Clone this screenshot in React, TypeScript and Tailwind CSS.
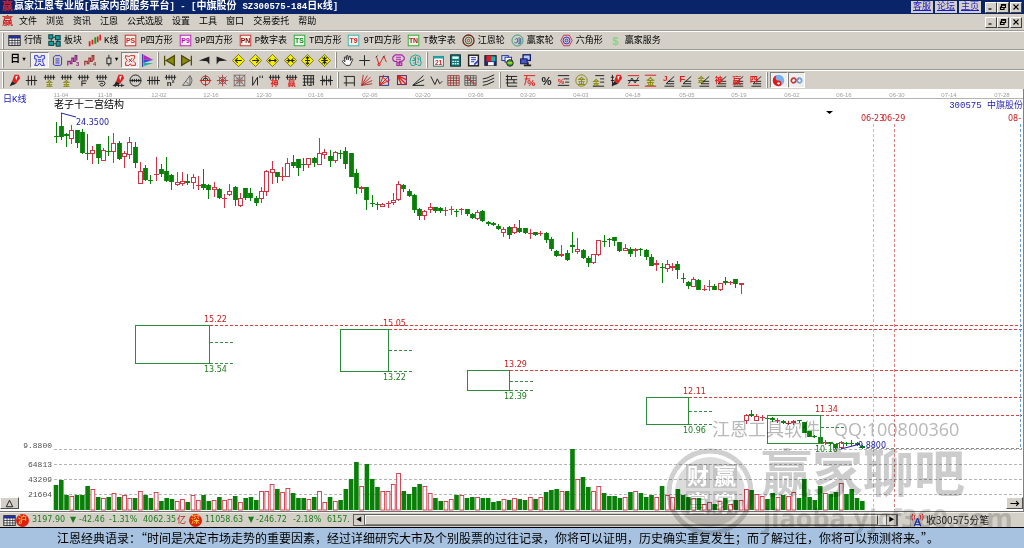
/**
 * Gann desktop terminal - daily K-line view for 300575.
 *
 *  - caption, menu and three toolbars
 *  - price / volume chart (one SVG, scales with the window)
 *  - index ticker, scroller and the quote of the day
 */

import type { ReactNode } from "react";
import clsx from "clsx";

type Candle = ["g" | "r", number, number, number, number, number];

// colour, wick top, body top, body bottom, wick bottom, volume top
const CANDLES: Candle[] = [
  ["g", 122, 136, 137, 143, 485], ["g", 113, 126, 137, 140, 480], ["g", 133, 134, 136, 147, 495],
  ["r", 125, 130, 139, 144, 496], ["g", 130, 130, 143, 148, 495], ["g", 129, 132, 153, 154, 495],
  ["g", 134, 153, 154, 160, 486], ["r", 146, 150, 154, 164, 489], ["g", 144, 144, 158, 164, 497],
  ["r", 148, 150, 161, 161, 498], ["g", 136, 151, 152, 156, 497], ["r", 133, 143, 152, 163, 493],
  ["g", 141, 143, 159, 160, 497], ["r", 151, 153, 157, 168, 495], ["r", 137, 142, 155, 159, 498],
  ["g", 142, 147, 163, 168, 498], ["r", 162, 171, 184, 184, 491], ["g", 165, 168, 180, 181, 495],
  ["g", 175, 180, 181, 184, 498], ["r", 157, 174, 175, 181, 492], ["g", 164, 169, 174, 177, 501],
  ["g", 157, 171, 181, 182, 498], ["g", 174, 175, 182, 190, 499], ["r", 172, 182, 185, 186, 501],
  ["r", 172, 181, 184, 186, 499], ["g", 174, 181, 183, 185, 502], ["r", 174, 177, 183, 189, 495],
  ["r", 176, 185, 186, 190, 500], ["g", 169, 184, 188, 190, 495], ["g", 184, 185, 190, 199, 501],
  ["r", 182, 187, 190, 197, 500], ["g", 188, 189, 198, 199, 497], ["r", 194, 198, 199, 208, 500],
  ["r", 184, 191, 195, 196, 499], ["g", 186, 187, 200, 206, 496], ["r", 193, 198, 206, 207, 502],
  ["g", 188, 188, 198, 200, 498], ["g", 188, 193, 198, 201, 497], ["g", 196, 198, 203, 206, 500],
  ["r", 187, 191, 199, 203, 491], ["r", 170, 171, 192, 196, 491], ["r", 161, 169, 173, 184, 484],
  ["g", 172, 172, 177, 183, 489], ["r", 167, 176, 177, 181, 492], ["r", 158, 163, 177, 177, 488],
  ["g", 155, 162, 166, 168, 493], ["g", 159, 159, 168, 176, 498], ["g", 158, 164, 165, 171, 498],
  ["r", 158, 158, 165, 168, 499], ["g", 157, 158, 163, 167, 497], ["r", 138, 153, 165, 165, 491],
  ["r", 149, 152, 155, 159, 502], ["g", 150, 156, 161, 167, 497], ["r", 151, 152, 161, 163, 501],
  ["g", 150, 153, 154, 159, 500], ["g", 147, 151, 164, 169, 489], ["g", 153, 153, 177, 177, 479],
  ["g", 169, 173, 188, 194, 462], ["r", 186, 187, 189, 193, 486], ["g", 187, 187, 200, 210, 464],
  ["g", 195, 203, 204, 207, 479], ["g", 202, 204, 205, 210, 487], ["r", 203, 204, 207, 207, 491],
  ["r", 201, 203, 204, 208, 491], ["r", 193, 200, 203, 205, 484], ["r", 181, 184, 200, 201, 473],
  ["g", 184, 185, 189, 192, 491], ["g", 189, 191, 196, 197, 494], ["g", 194, 195, 210, 213, 487],
  ["g", 208, 209, 216, 220, 484], ["r", 210, 211, 216, 220, 486], ["r", 203, 207, 210, 213, 493],
  ["g", 207, 207, 211, 213, 498], ["g", 207, 208, 211, 213, 501], ["r", 207, 210, 211, 216, 501],
  ["r", 206, 209, 210, 215, 499], ["g", 209, 211, 212, 217, 495], ["r", 208, 209, 210, 215, 495],
  ["g", 209, 209, 214, 216, 498], ["g", 213, 214, 218, 219, 497], ["r", 210, 212, 219, 220, 497],
  ["g", 210, 211, 221, 222, 498], ["g", 221, 222, 224, 226, 498], ["g", 222, 223, 225, 226, 502],
  ["g", 224, 226, 229, 230, 501], ["r", 227, 229, 233, 237, 499], ["g", 226, 227, 235, 239, 500],
  ["r", 224, 227, 233, 234, 498], ["g", 220, 228, 232, 233, 499], ["g", 228, 228, 233, 234, 500],
  ["r", 229, 233, 234, 239, 497], ["g", 232, 232, 235, 236, 499], ["r", 231, 233, 234, 236, 497],
  ["g", 232, 233, 240, 243, 492], ["g", 237, 239, 249, 251, 490], ["g", 250, 251, 256, 257, 489],
  ["r", 245, 254, 256, 257, 491], ["g", 250, 253, 260, 261, 491], ["g", 232, 245, 247, 253, 449],
  ["r", 238, 249, 252, 254, 479], ["g", 249, 250, 258, 259, 477], ["g", 256, 258, 263, 267, 487],
  ["r", 254, 254, 263, 264, 491], ["r", 240, 240, 255, 256, 486], ["g", 235, 241, 242, 247, 493],
  ["g", 238, 239, 240, 247, 496], ["g", 237, 237, 241, 246, 496], ["g", 242, 242, 251, 252, 498],
  ["r", 244, 248, 251, 251, 497], ["g", 247, 249, 254, 257, 492], ["r", 248, 249, 251, 257, 491],
  ["g", 248, 249, 250, 256, 493], ["g", 249, 250, 257, 260, 497], ["g", 254, 257, 266, 266, 495],
  ["r", 260, 263, 265, 271, 497], ["g", 263, 267, 268, 283, 486], ["r", 260, 264, 269, 272, 495],
  ["r", 263, 266, 268, 271, 497], ["g", 261, 264, 270, 279, 489], ["g", 273, 278, 279, 283, 495],
  ["g", 281, 282, 286, 289, 497], ["r", 277, 279, 287, 287, 498], ["g", 279, 280, 290, 290, 498],
  ["r", 285, 289, 290, 291, 504], ["r", 280, 286, 287, 291, 502], ["g", 284, 286, 290, 290, 504],
  ["r", 283, 283, 290, 291, 501], ["g", 277, 281, 283, 285, 498], ["r", 281, 282, 283, 285, 504],
  ["g", 279, 279, 284, 288, 500], ["r", 283, 283, 285, 294, 500], ["r", 414, 415, 421, 424, 489],
  ["g", 410, 414, 416, 417, 490], ["r", 414, 416, 421, 421, 494], ["r", 415, 417, 418, 421, 496],
  ["g", 416, 418, 419, 421, 499], ["g", 417, 418, 420, 422, 493], ["r", 418, 420, 421, 423, 497],
  ["g", 420, 421, 423, 424, 495], ["r", 421, 423, 424, 425, 496], ["r", 420, 421, 423, 425, 492],
  ["g", 420, 420, 421, 423, 498], ["g", 422, 422, 433, 433, 479], ["g", 431, 431, 437, 437, 497],
  ["g", 435, 436, 437, 438, 500], ["g", 437, 437, 443, 444, 486], ["r", 440, 442, 443, 445, 493],
  ["g", 442, 442, 444, 445, 494], ["g", 444, 444, 448, 449, 492], ["r", 441, 442, 448, 449, 483],
  ["g", 442, 443, 444, 446, 494], ["g", 440, 443, 444, 446, 489], ["g", 442, 443, 445, 446, 498],
  ["g", 445, 446, 448, 449, 501],
];

const AXIS_DATES: [number, string][] = [
  [61, "11-04"], [105, "11-18"], [159, "12-02"], [211, "12-16"], [264, "12-30"],
  [316, "01-16"], [370, "02-06"], [423, "02-20"], [476, "03-06"], [528, "03-20"],
  [581, "04-03"], [633, "04-18"], [687, "05-05"], [739, "05-19"], [792, "06-02"],
  [844, "06-16"], [897, "06-30"], [949, "07-14"], [1002, "07-28"],
];

// Palace boxes: left, right, top, bottom, middle level, high and low price
const BOXES = [
  { x1: 135, x2: 209, y1: 325, y2: 363, mid: 342, high: "15.22", low: "13.54" },
  { x1: 340, x2: 388, y1: 329, y2: 371, mid: 350, high: "15.05", low: "13.22" },
  { x1: 467, x2: 509, y1: 370, y2: 390, mid: 381, high: "13.29", low: "12.39" },
  { x1: 646, x2: 688, y1: 397, y2: 424, mid: 411, high: "12.11", low: "10.96" },
  { x1: 767, x2: 820, y1: 415, y2: 443, mid: 427, high: "11.34", low: "10.10" },
];

const VOLUME_LEVELS: [number, string][] = [
  [464, "64813"],
  [479, "43209"],
  [494, "21604"],
];

const MENUS = ["文件", "浏览", "资讯", "江恩", "公式选股", "设置", "工具", "窗口", "交易委托", "帮助"];

const QUOTE =
  "江恩经典语录：“时间是决定市场走势的重要因素，经过详细研究大市及个别股票的过往记录，你将可以证明，历史确实重复发生；而了解过往，你将可以预测将来。”。";

const RED = "#e02020";
const INK = "#222222";
const OLIVE = "#8a8a10";

/* ---------- icon helpers, all on a 16 x 16 grid ---------- */

function Icon({ children }: { children: ReactNode }) {
  return (
    <svg viewBox="0 0 16 16" className="size-[13px] shrink-0" fill="none" stroke={INK} strokeWidth="1.2" aria-hidden="true">
      {children}
    </svg>
  );
}

function Char({ t, x = 8, y = 15, size = 10, color = RED }: { t: string; x?: number; y?: number; size?: number; color?: string }) {
  return (
    <text x={x} y={y} fontSize={size} fill={color} stroke="none" textAnchor="middle" fontWeight="bold" fontFamily="'Liberation Sans','Noto Sans CJK SC',sans-serif">
      {t}
    </text>
  );
}

const Comb = () => <path d="M1 4H15M3 1V7M6.3 1V7M9.6 1V7M13 1V7" />;
const Levels = () => <path d="M3 15H15M5 12H15M7 9H15M5 12L15 3" />;
const Pen = () => (
  <g stroke="none">
    <path d="M8 1L13 1L15 5L10 12L5 9Z" fill={RED} />
    <path d="M5 9L10 12L2 15Z" fill={INK} />
    <path d="M9 3L12 2L10 8Z" fill="#ffffff" />
  </g>
);
const Grid = ({ color = "#8b2222" }: { color?: string }) => (
  <path stroke={color} strokeWidth="0.9" d="M1 2H15V14H1ZM1 5H15M1 8H15M1 11H15M4.5 2V14M8 2V14M11.5 2V14" />
);
const LetterBox = ({ t, color, text = RED }: { t: string; color: string; text?: string }) => (
  <>
    <rect x="1.5" y="1.5" width="13" height="13" stroke={color} fill="#f4f0e8" />
    <Char t={t} y={11.5} size={8.5} color={text} />
  </>
);
const Diamond = ({ d }: { d: string }) => (
  <>
    <path d="M8 0.5L15.5 8L8 15.5L0.5 8Z" fill="#f4f000" stroke="#55550a" strokeWidth="0.9" />
    <path d={d} strokeWidth="1.3" />
  </>
);

const SHORTCUTS: { label: string; icon: ReactNode }[] = [
  {
    label: "行情",
    icon: <><rect x="1" y="2" width="14" height="12" fill="#fff" stroke="#223" /><path d="M1 4H15" stroke="#1c2c9c" strokeWidth="3" /><path d="M1 8H15M1 11H15M5 5V14M8.5 5V14M12 5V14" strokeWidth="0.9" /></>,
  },
  {
    label: "板块",
    icon: <g fill="#12a0a0" stroke="#0b3c3c"><rect x="1" y="1" width="5" height="5" /><rect x="9" y="2" width="6" height="5" /><rect x="1" y="9" width="6" height="5" /><rect x="10" y="9" width="5" height="6" /><path d="M6 4H9M4 6V9M12 7V9M7 12H10" /></g>,
  },
  {
    label: "K线",
    icon: <><path d="M2 9V15M5.5 7V13" stroke={RED} strokeWidth="2.2" /><path d="M9 4V12" stroke="#10a010" strokeWidth="2.4" /><path d="M12 3V10M15 1V8" stroke={RED} strokeWidth="2" /></>,
  },
  { label: "P四方形", icon: <LetterBox t="PS" color="#d03030" /> },
  { label: "9P四方形", icon: <LetterBox t="P9" color="#c020c0" text="#b010b0" /> },
  { label: "P数字表", icon: <LetterBox t="PN" color="#d03030" text="#701010" /> },
  { label: "T四方形", icon: <LetterBox t="TS" color="#20b040" text="#109020" /> },
  { label: "9T四方形", icon: <LetterBox t="T9" color="#30b8b8" /> },
  { label: "T数字表", icon: <LetterBox t="TN" color="#30b030" text="#a02020" /> },
  {
    label: "江恩轮",
    icon: <><circle cx="8" cy="8" r="6.8" stroke="#702020" strokeWidth="1.6" /><circle cx="8" cy="8" r="4" stroke="#207020" /><circle cx="8" cy="8" r="1.5" stroke={RED} /></>,
  },
  {
    label: "赢家轮",
    icon: <><circle cx="8" cy="8" r="6.8" stroke="#3a9a70" /><path d="M5 7Q8 3 8 8T4 10M10 4V12M12 5V11Q11 13 9 12" stroke="#3060a0" /></>,
  },
  {
    label: "六角形",
    icon: <><path d="M4.5 1.5H11.5L15 8L11.5 14.5H4.5L1 8Z" stroke="#d03050" /><circle cx="8" cy="8" r="4.2" stroke="#3030d0" /><circle cx="8" cy="8" r="1.7" stroke="#3030d0" /></>,
  },
  { label: "赢家服务", icon: <Char t="$" y={13} size={14} color="#7ed87e" /> },
];

type Tool = { name: string; icon: ReactNode; pressed?: boolean };

const CHART_TOOLS: Tool[] = [
  { name: "主图", pressed: true, icon: <path stroke="#3038d8" d="M2 2H6V4H10V2H14V6H12V10L14 14H10L8 11L6 14H2L4 10V6H2ZM6 7H10M6 9H10" /> },
  { name: "报告", icon: <path stroke="#3038d8" d="M3 4L5 2H11L13 4V13L11 14H5L3 13ZM5.5 6H10.5M5.5 8.5H10.5M5.5 11H10.5" /> },
  { name: "三段", icon: <><path stroke="#8a2080" d="M1 14V9H4V12H6V5H8V9H10V2H12V8" strokeWidth="1.5" /><Char t="3" x={13} y={15} size={7} color="#8a2080" /></> },
  { name: "四段", icon: <><path stroke="#a03030" d="M1 14V9H4V12H6V5H8V9H10V2H12V8" strokeWidth="1.5" /><Char t="4" x={13} y={15} size={7} color="#a03030" /></> },
];

const PLAY_TOOLS: Tool[] = [
  { name: "首页", icon: <path d="M2 2V14M14 2V14L4 8Z" fill={OLIVE} stroke="#4c4c08" strokeWidth="1.6" /> },
  { name: "末页", icon: <path d="M14 2V14M2 2V14L12 8Z" fill={OLIVE} stroke="#4c4c08" strokeWidth="1.6" /> },
  { name: "上一只", icon: <path d="M14 3V13L11 9L1 8Z" fill={INK} stroke="none" /> },
  { name: "下一只", icon: <path d="M2 3V13L5 9L15 8Z" fill={INK} stroke="none" /> },
  { name: "左移", icon: <Diamond d="M12 8H4M7 5L4 8L7 11" /> },
  { name: "右移", icon: <Diamond d="M4 8H12M9 5L12 8L9 11" /> },
  { name: "左右扩展", icon: <Diamond d="M3 8H13M5.5 6L3.5 8L5.5 10M10.5 6L12.5 8L10.5 10" /> },
  { name: "左右压缩", icon: <Diamond d="M3 8H13M4.5 5.5L7 8L4.5 10.5M11.5 5.5L9 8L11.5 10.5" /> },
  { name: "上下扩展", icon: <Diamond d="M8 3V13M6 5.5L8 3.5L10 5.5M6 10.5L8 12.5L10 10.5M5 8H11" /> },
  { name: "上下压缩", icon: <Diamond d="M8 3V13M5.5 4.5L8 7L10.5 4.5M5.5 11.5L8 9L10.5 11.5M4 8H12" /> },
];

const CURSOR_TOOLS: Tool[] = [
  { name: "拖动", icon: <path fill="#fff" strokeWidth="1.1" d="M6 14L1.5 9L3 8L5 9.5L4 4L5.5 3.5L7 7V2H8.5L9 7L10.5 2.5L12 3L11.5 8L13.5 5.5L14.5 6.5L12 12L11 14Z" /> },
  { name: "十字", icon: <path d="M8 1.5V14.5M1.5 8H14.5" /> },
  { name: "折线", icon: <><path stroke={RED} d="M2 4L5 13L11 3L14 10" /><path d="M1 4L3 2M10 4L12 2" /><circle cx="5" cy="13" r="1.5" stroke={RED} /></> },
  { name: "江恩箱", icon: <path stroke="#b020b0" strokeWidth="1.4" d="M1 4L4 1H12L15 4V7L12 9H9V14H6V9H3L1 7ZM5 4H11M5 6.5H11M6 11H12V14H9" /> },
  { name: "脑图", icon: <path stroke="#16a090" d="M2 6Q2 2 6 2Q8 0 10 2Q15 2 14 7Q16 11 14 14H11Q10 12 8 13Q6 15 3 14Q0 9 2 6ZM5 5H7V8H4M8 3V13M10 5H12V8M10 10H12M5 11H7" /> },
];

const SYSTEM_TOOLS: Tool[] = [
  { name: "日历", icon: <><rect x="2" y="3" width="12" height="12" fill="#fff" stroke="#187878" /><path d="M2 4H14" stroke="#20a0a0" strokeWidth="3" /><Char t="21" y={13.5} size={8} /></> },
  { name: "计算器", icon: <><rect x="2" y="1" width="12" height="14" fill="#107878" stroke="#082c2c" /><rect x="4" y="3" width="8" height="3" fill="#dff" stroke="none" /><path d="M4 9H12M4 12H12" stroke="#dff" strokeDasharray="2 1" strokeWidth="1.6" /></> },
  { name: "记事", icon: <><rect x="2" y="1.5" width="12" height="13" fill="#f4f4ff" strokeWidth="1.8" /><path d="M5 4.5H11M5 7H11M5 9.5H9" stroke="#2838b8" /><path d="M9 13L14 8" stroke="#2838b8" strokeWidth="2" /></> },
  { name: "保存", icon: <><rect x="1" y="2" width="14" height="12" fill="#202a90" /><rect x="3" y="2" width="7" height="7" fill="#e02020" stroke="none" /><rect x="9" y="3" width="5" height="6" fill="#20b0b0" stroke="none" /><rect x="5" y="10" width="7" height="4" fill="#fff" stroke="none" /></> },
  { name: "网络", icon: <><rect x="1" y="2" width="8" height="6" fill="#d8e4ff" stroke="#2030a0" /><rect x="5" y="4" width="8" height="6" fill="#fff" stroke="#2030a0" /><circle cx="11" cy="11" r="4" fill="#38a048" /><path d="M8 11H14" stroke="#ff0" /></> },
  { name: "传输", icon: <><rect x="5" y="1" width="9" height="7" fill="#b8c8f8" stroke="#101860" strokeWidth="1.6" /><rect x="2" y="6" width="8" height="6" fill="#4858c0" stroke="#101860" /><path d="M6 14H15M11 10V14" strokeWidth="2" /></> },
];

const DRAW_TOOLS: Tool[] = [
  { name: "画笔", icon: <Pen /> },
  { name: "等分", icon: <path d="M1 8H15M4 2V14M8 2V14M12 2V14" /> },
  { name: "黄金一", icon: <><Comb /><Char t="金" size={9} color={OLIVE} /></> },
  { name: "黄金二", icon: <><Comb /><Char t="金" size={9} color={OLIVE} /></> },
  { name: "斐波", icon: <><Comb /><path d="M6 15V8.5H12M6 11.5H11" /></> },
  { name: "螺旋", icon: <><Comb /><path d="M4 9H11Q14 12 11 14Q7 16 6 13Q7 10 10 12" /></> },
  { name: "标尺", icon: <><Pen /><path d="M1 14H15M4 12V16M8 12V16M12 12V16" /></> },
  { name: "圆尺", icon: <><circle cx="8" cy="8" r="6.8" /><path d="M1 8H15M4 6V10M6.6 6V10M9.3 6V10M12 6V10" /></> },
  { name: "周期", icon: <path d="M0 8H16M3 3V13M6.3 3V13M9.6 3V13M13 3V13" /> },
  { name: "平方", icon: <><Comb /><Char t="n²" y={15} size={10} color={INK} /></> },
  { name: "扇形", icon: <path stroke="#666" d="M2 14L11 2V14ZM11 2Q16 8 11 14M6 9L11 14" /> },
  { name: "圆心", icon: <><circle cx="8" cy="8" r="5.5" stroke="#b02020" /><path d="M8 1V15M1 8H15" stroke={RED} /><path d="M5 8A3 3 0 0 1 11 8" /></> },
  { name: "星形", icon: <><path stroke="#c04040" d="M8 1V15M1 8H15M3 3L13 13M13 3L3 13" /><circle cx="8" cy="8" r="4" stroke="#666" /></> },
  { name: "方阵", icon: <><rect x="1.5" y="1.5" width="13" height="13" stroke="#777" /><path stroke="#a05050" d="M1 1L15 15M15 1L1 15M8 1V15M1 8H15" strokeWidth="0.9" /><rect x="5" y="5" width="6" height="6" stroke="#777" /></> },
  { name: "波动", icon: <path d="M2 3V14L8 4V14M11 2V5M14 2V5" /> },
  { name: "神奇", icon: <><Comb /><Char t="神" size={10} /></> },
  { name: "赢家", icon: <><Comb /><Char t="赢" size={10} /></> },
  { name: "网格", icon: <path d="M1 2H15M1 6H15M1 10H15M3 2V14M7 2V14M11 2V14M14 2V14M1 14H5M8 14H12" /> },
  { name: "对称", icon: <path d="M0 8H16M3 2V14M8 2V14M13 2V14M5 6V10M11 6V10" /> },
];

const SHAPE_TOOLS: Tool[] = [
  { name: "方框", icon: <path d="M4 3H14V11H4ZM1 3H4M4 11V15M1 11H4M14 11V15" /> },
  { name: "射线", icon: <path stroke="#b83030" d="M2 14L4 1M2 14L9 2M2 14L13 4M2 14L15 8M2 14L15 12" /> },
  { name: "箱射线", icon: <><rect x="2" y="3" width="11" height="11" stroke="#333a90" /><path stroke={RED} d="M2 14L13 3M2 14L7 1M2 14L15 7M5 3L13 11" /></> },
  { name: "角度箱", icon: <><rect x="3" y="2" width="11" height="11" stroke="#5a2060" /><path stroke={RED} strokeWidth="1.7" d="M3 2L14 13M3 2L14 7M3 2L8 13" /></> },
  { name: "角度线", icon: <path d="M1 14L14 2M1 14L15 7M1 14H15" /> },
  { name: "波浪", icon: <path d="M1 3L6 13L9 6L12 12L15 9" /> },
  { name: "红格", icon: <Grid /> },
  { name: "格线", icon: <><Grid color="#444444" /><path d="M1 2L15 14" stroke={RED} /></> },
  { name: "平行", icon: <path d="M1 6L6 5L15 1M1 10L6 9L15 5M1 14L6 13L15 9" /> },
];

const LEVEL_TOOLS: Tool[] = [
  { name: "阶梯", icon: <path d="M3 1V15M1 3H15M1 7H15M1 11H15M3 15H15M8 3V7M11 7V11" /> },
  { name: "回撤", icon: <><path stroke={RED} d="M1 2H15M2 6H9M5 2L2 14" /><Char t="%" x={10} size={11} /></> },
  { name: "百分比", icon: <Char t="%" y={13} size={14} color={INK} /> },
  { name: "百分线", icon: <><path d="M1 2H15M8 6H15M10 10H15M1 14H15" /><Char t="%" x={5} y={12} size={9} /></> },
  { name: "金圆", icon: <><circle cx="8" cy="8" r="7" stroke={OLIVE} /><Char t="金" y={12} size={10} color={OLIVE} /></> },
  { name: "金线", icon: <><path d="M4 2H15M10 6H15M10 10H15M1 15H15" /><Char t="金" x={5} y={13} size={9} color={OLIVE} /></> },
  { name: "标注", icon: <><Pen /><path d="M3 1V15M1 4H5M1 8H5" /></> },
  { name: "通道", icon: <><path stroke={RED} d="M1 2H15M1 14H15" /><path d="M2 12L6 5L10 11L14 4M1 8H15" /></> },
  { name: "金带", icon: <><path stroke={RED} d="M1 1.5H15M1 15H15" /><Char t="金" y={13} size={11} color={OLIVE} /></> },
  { name: "江恩角", icon: <><Levels /><Char t="J" x={4} y={9} size={10} /></> },
  { name: "斐波角", icon: <><Levels /><Char t="F" x={4} y={10} size={12} /></> },
  { name: "黄金角", icon: <><Levels /><Char t="金" x={5} y={10} size={9} color={OLIVE} /></> },
  { name: "神角", icon: <><Levels /><Char t="神" x={6} y={11} size={10} /></> },
  { name: "赢角", icon: <><Levels /><Char t="赢" x={7} y={12} size={11} /></> },
  { name: "四角", icon: <><Levels /><Char t="四" x={6} y={10} size={10} /></> },
];

function ToolGroup({ tools, className }: { tools: Tool[]; className: string }) {
  return (
    <div className={clsx("flex h-full shrink-0 items-center", className)}>
      {tools.map((tool) => (
        <button
          key={tool.name}
          aria-label={tool.name}
          className={clsx(
            "flex h-4 flex-1 items-center justify-center",
            tool.pressed && "border border-t-[#808080] border-l-[#808080] border-r-white border-b-white bg-[#efeeea]"
          )}
        >
          <Icon>{tool.icon}</Icon>
        </button>
      ))}
    </div>
  );
}

const Grip = () => <span className="mx-[2px] h-4 w-[2px] shrink-0 border-l border-white bg-[#8c8a84]" />;

function WindowButtons() {
  return (
    <div className="ml-1 flex">
      {["M3 12H9", "M5 3H13V9H5ZM5 4.5H13M3 7V13H10V10", "M3 3L13 13M13 3L3 13"].map((d, i) => (
        <button
          key={d}
          aria-label={["最小化", "还原", "关闭"][i]}
          className="flex h-[11px] w-3 items-center justify-center border border-t-white border-l-white border-r-[#404040] border-b-[#404040] bg-[#d4d0c8] last:ml-px"
        >
          <svg viewBox="0 0 16 16" className="size-2" fill="none" stroke="#000" strokeWidth="2.4">
            <path d={d} />
          </svg>
        </button>
      ))}
    </div>
  );
}

function Chart() {
  return (
    <svg viewBox="0 89 1024 422" className="block w-full bg-white" fontFamily="'DejaVu Sans',sans-serif" fontSize="8">
      {/* date axis */}
      <path d="M54 98.5H1024" stroke="#b4b4b4" fill="none" />
      <g fill="#a0a0a0" fontSize="6" textAnchor="middle" fontFamily="'Liberation Sans',sans-serif">
        {AXIS_DATES.map(([x, label]) => (
          <text key={label} x={x} y="97">{label}</text>
        ))}
      </g>

      {/* headings */}
      <g fontFamily="'Liberation Mono','Noto Sans CJK SC',monospace" fontSize="9">
        <text x="3" y="102" fill="#2222b8">日K线</text>
        <text x="54" y="108" fill="#000" fontSize="10">老子十二宫结构</text>
        <text x="1023" y="108" fill="#2222b8" textAnchor="end">300575 中旗股份</text>
      </g>

      {/* price and volume levels */}
      <g stroke="#b4b4b4" strokeDasharray="3 2" fill="none">
        <path d="M54 449.5H1022" />
        {VOLUME_LEVELS.map(([y]) => (
          <path key={y} d={`M54 ${y + 0.5}H1022`} />
        ))}
      </g>
      <g fill="#505050" textAnchor="end" fontFamily="'Liberation Mono',monospace">
        <text x="52" y="448">9.8800</text>
        {VOLUME_LEVELS.map(([y, label]) => (
          <text key={label} x="52" y={y + 3}>{label}</text>
        ))}
      </g>

      {/* candles with their volume bars */}
      {CANDLES.map(([kind, high, top, bottom, low, volume], i) => {
        const x = 56 + i * 5.27;
        const mid = Math.floor(x) + 0.5;
        if (kind === "g") {
          return (
            <g key={i} fill="#088008">
              <path d={`M${mid} ${high}V${low}`} stroke="#088008" />
              <rect x={mid - 2.4} y={top} width="4.8" height={Math.max(bottom - top, 1)} />
              <rect x={x - 2.3} y={volume} width="4.6" height={510 - volume} />
            </g>
          );
        }
        return (
          <g key={i} fill="#fff" stroke="#d03444">
            <path d={`M${mid} ${high}V${low}`} />
            {bottom - top > 1 ? (
              <rect x={mid - 2} y={top + 0.5} width="4" height={bottom - top - 1} />
            ) : (
              <path d={`M${mid - 2.5} ${top + 0.5}H${mid + 2.5}`} />
            )}
            <rect x={x - 1.9} y={volume + 0.5} width="3.8" height={509.5 - volume} strokeWidth="0.9" />
          </g>
        );
      })}

      {/* palace boxes */}
      {BOXES.map((box) => (
        <g key={box.high} fill="none">
          <rect x={box.x1 + 0.5} y={box.y1 + 0.5} width={box.x2 - box.x1} height={box.y2 - box.y1} stroke="#2c8c3c" />
          <path d={`M${box.x2 + 1} ${box.y1 + 0.5}H1022`} stroke="#d84040" strokeDasharray="3 2" />
          <path d={`M${box.x2 + 1} ${box.mid + 0.5}h25M${box.x2 + 1} ${box.y2 + 0.5}h25`} stroke="#3a8a46" strokeDasharray="3 2" />
          <text x={box.x2 - 5} y={box.y1 - 3} fill="#c41c1c">{box.high}</text>
          <text x={box.x2 - 5} y={box.y2 + 9} fill="#1c7c1c">{box.low}</text>
        </g>
      ))}

      {/* projected dates */}
      <g fill="none" strokeDasharray="3 2">
        <path d="M873.5 124V510" stroke="#98cce0" />
        <path d="M894.5 124V510" stroke="#d88080" />
        <path d="M1020.5 124V448" stroke="#6c9cdc" />
        <path d="M866 448.5H1022" stroke="#888888" />
      </g>
      <g fill="#c41c1c">
        <text x="861" y="121">06-23</text>
        <text x="882" y="121">06-29</text>
        <text x="1008" y="121">08-</text>
      </g>
      <path d="M826 111H833L829.5 114Z" fill="#000" />

      {/* extremes */}
      <g fill="#2020a8">
        <path d="M61 113L76 117M841 449L860 444" stroke="#2020a8" fill="none" />
        <text x="76" y="125">24.3500</text>
        <text x="858" y="448">9.8800</text>
      </g>
      <path d="M1023.5 89V511" stroke="#808080" fill="none" />
    </svg>
  );
}

function Watermark() {
  return (
    <svg
      viewBox="0 0 364 148"
      className="pointer-events-none absolute right-0 bottom-0 w-[364px] mix-blend-multiply"
      fill="#cccccc"
      fontFamily="'Open Sans','Noto Sans CJK SC',sans-serif"
      aria-hidden="true"
    >
      <text x="52" y="36" fontSize="18" fill="#b8b8b8">江恩工具软件</text>
      <text x="174" y="36" fontSize="18" fill="#b8b8b8">QQ:100800360</text>
      <circle cx="50" cy="92" r="41" fill="none" stroke="#d0d0d0" strokeWidth="5" />
      <circle cx="50" cy="92" r="35" fill="#dcdcdc" />
      <g fill="#c4c4c4">
        <rect x="26" y="64" width="24" height="24" />
        <rect x="53" y="64" width="24" height="24" />
        <rect x="26" y="91" width="24" height="24" />
        <rect x="53" y="91" width="24" height="24" />
      </g>
      <g fill="#ffffff" fontSize="22" fontWeight="bold">
        <text x="27" y="84">财</text>
        <text x="54" y="84">赢</text>
        <text x="27" y="111">富</text>
        <text x="54" y="111">家</text>
      </g>
      <text x="101" y="92" fontSize="51" fontWeight="bold">赢家聊吧</text>
      <text x="103" y="128" fontSize="27" fontWeight="bold" fill="#d6d6d6">jiaoba.yjcf360.com</text>
    </svg>
  );
}

function IndexBadge({ t }: { t: string }) {
  return (
    <span className="flex size-[13px] shrink-0 items-center justify-center rounded-full bg-[#dc2010] text-[9px] leading-none text-[#ffe840]">{t}</span>
  );
}

function StatusBar() {
  return (
    <div className="flex h-[15px] items-center border-t border-[#f0eee8] bg-[#d4d0c8] text-[8px] text-[#1c7c1c]">
      <div className="flex w-[353px] shrink-0 items-center overflow-hidden pl-[3px] font-['DejaVu_Sans','Noto_Sans_CJK_SC',sans-serif] whitespace-nowrap">
        <Icon>{SHORTCUTS[0].icon}</Icon>
        <IndexBadge t="沪" />
        <span className="ml-[3px] w-[38px] shrink-0">3197.90</span>
        <span className="w-[9px] shrink-0">▼</span>
        <span className="w-[30px] shrink-0">-42.46</span>
        <span className="w-[34px] shrink-0">-1.31%</span>
        <span className="w-[34px] shrink-0">4062.35</span>
        <span className="w-3 shrink-0 text-[9px] text-[#b02020]">亿</span>
        <IndexBadge t="深" />
        <span className="ml-[3px] w-[43px] shrink-0">11058.63</span>
        <span className="w-2 shrink-0">▼</span>
        <span className="w-[37px] shrink-0">-246.72</span>
        <span className="w-[34px] shrink-0">-2.18%</span>
        <span>6157.</span>
      </div>
      <div className="flex h-3 flex-1 items-center border border-[#606060] bg-[#e8e6e0]">
        <button aria-label="向左" className="flex h-full w-[11px] items-center justify-center border-r border-[#606060] bg-[#d4d0c8] text-[6px] text-black">◀</button>
        <span className="h-full flex-1 border border-t-white border-l-white border-r-[#404040] border-b-[#808080] bg-[#d4d0c8]" />
        <span className="w-2" />
        <button aria-label="向右" className="flex h-full w-[11px] items-center justify-center border-x border-[#606060] bg-[#d4d0c8] text-[6px] text-black">▶</button>
      </div>
      <div className="ml-3 flex w-[114px] shrink-0 items-center gap-[2px] border-l border-[#a8a49c] font-['Noto_Sans_CJK_SC',sans-serif] text-[10px] leading-3 text-[#222]">
        <Icon>
          <path d="M8 5L4 15M8 5L12 15M6 10H10M5 13H11" stroke="#2038b0" strokeWidth="1.6" />
          <path d="M5 1Q3 4 5 7M11 1Q13 4 11 7M2 0Q0 4 2 8M14 0Q16 4 14 8" stroke={RED} />
        </Icon>
        收300575分笔
      </div>
    </div>
  );
}

export default function App() {
  return (
    <div className="relative flex min-h-screen flex-col overflow-hidden bg-[#d4d0c8] font-['Liberation_Mono','Noto_Sans_CJK_SC',monospace] text-[9px] leading-3 text-black">
      {/* Caption */}
      <header className="flex h-[14px] items-center bg-[#0a246a] px-[2px]">
        <span className="w-3 shrink-0 text-[11px] font-bold text-[#e02030]">赢</span>
        <h1 className="flex flex-1 items-baseline text-[10px] leading-[14px] font-bold whitespace-pre text-white">
          赢家江恩专业版<span className="text-[9px]">[</span>赢家内部服务平台<span className="text-[9px]">] - [</span>中旗股份
          <span className="ml-[6px] text-[9px]">SZ300575-184</span>日<span className="text-[9px]">K</span>线<span className="text-[9px]">]</span>
        </h1>
        <nav className="flex gap-[2px]">
          {["客服", "论坛", "主页"].map((label) => (
            <a key={label} href="#" className="flex h-3 w-[22px] items-center justify-center bg-[#d4d0c8] text-[9px] leading-3 text-[#1818d0] underline">
              {label}
            </a>
          ))}
        </nav>
        <WindowButtons />
      </header>

      {/* Menu */}
      <div className="flex h-[17px] items-center border-b border-[#9c9a94] px-[2px]">
        <span className="w-[17px] shrink-0 text-[11px] font-bold text-[#d02020]">赢</span>
        <nav className="flex flex-1 gap-[9px]">
          {MENUS.map((menu) => (
            <button key={menu}>{menu}</button>
          ))}
        </nav>
        <WindowButtons />
      </div>

      {/* Shortcuts */}
      <div className="flex h-[19px] items-center border-t border-b border-t-white border-b-[#9c9a94]">
        <Grip />
        {SHORTCUTS.map(({ label, icon }) => (
          <button key={label} className="flex shrink-0 items-center gap-[3px] pr-[4px] pl-[2px] whitespace-nowrap">
            <Icon>{icon}</Icon>
            {label}
          </button>
        ))}
      </div>

      {/* Chart tools */}
      <div className="flex h-5 items-center border-t border-b border-t-white border-b-[#9c9a94]">
        <Grip />
        <button className="flex w-6 items-center justify-center text-[10px] font-bold">
          日<span className="ml-[2px] text-[6px]">▼</span>
        </button>
        <ToolGroup tools={CHART_TOOLS} className="w-[69px]" />
        <button aria-label="线型" className="flex w-[22px] items-center justify-center">
          <Icon>
            <rect x="6" y="5" width="5" height="7" />
            <path d="M8.5 1V5M8.5 12V15" />
          </Icon>
          <span className="text-[6px]">▼</span>
        </button>
        <ToolGroup
          tools={[
            { name: "形态", pressed: true, icon: <path stroke="#d02828" d="M2 2L6 3L8 2L13 2V5L11 8L14 11V14H9L8 12L6 14H2V10L4 8L2 5ZM6 6L10 10M10 5L6 10" /> },
            { name: "分布", icon: <><path d="M2 0V16" stroke="#2828a0" /><path d="M3 1L15 7H3Z" fill="#c020c0" stroke="none" /><path d="M3 7H15L3 11Z" fill="#3050d0" stroke="none" /><path d="M3 11H15L3 15Z" fill="#20b0a0" stroke="none" /></> },
          ]}
          className="w-[34px]"
        />
        <Grip />
        <ToolGroup tools={PLAY_TOOLS} className="w-[172px]" />
        <Grip />
        <ToolGroup tools={CURSOR_TOOLS} className="w-[85px]" />
        <Grip />
        <ToolGroup tools={SYSTEM_TOOLS} className="w-[104px]" />
      </div>

      {/* Drawing tools */}
      <div className="flex h-[19px] items-center border-t border-white">
        <Grip />
        <ToolGroup tools={DRAW_TOOLS} className="w-[329px]" />
        <Grip />
        <ToolGroup tools={SHAPE_TOOLS} className="w-[156px]" />
        <Grip />
        <ToolGroup tools={LEVEL_TOOLS} className="w-[261px]" />
        <Grip />
        <ToolGroup
          tools={[
            { name: "太极", pressed: true, icon: <><circle cx="8" cy="8" r="7" fill="#78b0f0" stroke="none" /><path d="M8 1A7 7 0 0 0 8 15A3.5 3.5 0 0 0 8 8A3.5 3.5 0 0 1 8 1Z" fill="#e01818" stroke="none" /><circle cx="8" cy="11.5" r="1.5" fill="#fff" stroke="none" /></> },
            { name: "循环", pressed: true, icon: <><path d="M8 8Q5 3 2.5 6T4 11Q6 11 8 8L11 5" stroke="#d03030" strokeWidth="2" /><path d="M8 8Q11 3 13.5 6T12 11Q10 11 8 8" stroke="#68a0e0" strokeWidth="2" /></> },
          ]}
          className="w-[35px]"
        />
      </div>

      {/* Chart */}
      <main className="relative">
        <Chart />
        <button aria-label="展开指标" className="absolute bottom-[2px] left-0 flex h-3 w-[19px] items-center justify-center border border-t-white border-l-white border-r-[#505050] border-b-[#505050] bg-[#d4d0c8]">
          <Icon><path d="M8 4L12 12H4Z" /></Icon>
        </button>
        <button aria-label="右移图表" className="absolute right-px bottom-[2px] flex h-3 w-[17px] items-center justify-center border border-t-white border-l-white border-r-[#505050] border-b-[#505050] bg-[#d4d0c8]">
          <Icon><path d="M3 8H13M10 5L13 8L10 11" strokeWidth="1.4" stroke="#000" /></Icon>
        </button>
      </main>

      <div className="h-px bg-[#707070]" />
      <StatusBar />

      {/* Quote of the day */}
      <footer className="flex-1 border-t border-black bg-[#a6c2e0] pl-[57px] font-['Noto_Sans_CJK_SC',sans-serif] text-[12px] leading-5 whitespace-nowrap">
        {QUOTE}
      </footer>

      <Watermark />
    </div>
  );
}
